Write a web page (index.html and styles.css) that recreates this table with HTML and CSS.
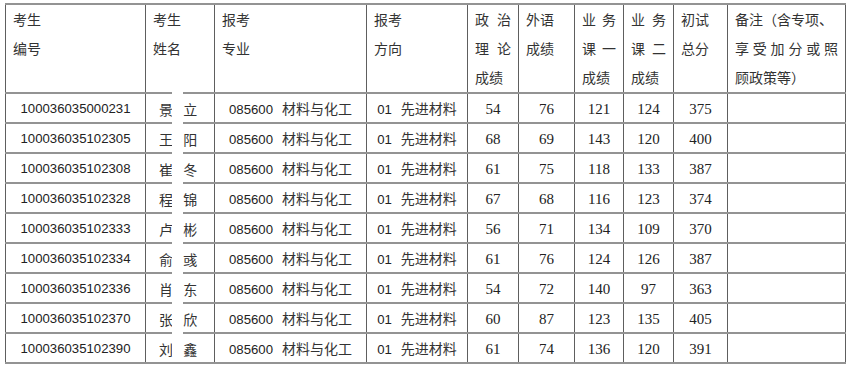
FILE: index.html
```html
<!DOCTYPE html>
<html lang="zh-CN">
<head>
    <meta charset="UTF-8">
    <title>复试名单</title>
    <link rel="stylesheet" href="styles.css">
</head>
<body>
    <div class="sheet">
        <table class="list">
            <colgroup>
                <col style="width:140px"><col style="width:69px"><col style="width:152px"><col style="width:101px">
                <col style="width:51px"><col style="width:56px"><col style="width:49px"><col style="width:50px">
                <col style="width:54px"><col style="width:118px">
            </colgroup>
            <thead>
                <tr>
                    <th><div>考生</div><div>编号</div></th>
                    <th><div>考生</div><div>姓名</div></th>
                    <th><div>报考</div><div>专业</div></th>
                    <th><div>报考</div><div>方向</div></th>
                    <th><div class="spread">政治</div><div class="spread">理论</div><div>成绩</div></th>
                    <th><div>外语</div><div>成绩</div></th>
                    <th><div class="spread">业务</div><div class="spread">课一</div><div>成绩</div></th>
                    <th><div class="spread">业务</div><div class="spread">课二</div><div>成绩</div></th>
                    <th><div>初试</div><div>总分</div></th>
                    <th><div>备注（含专项、</div><div class="spread">享受加分或照</div><div>顾政策等）</div></th>
                </tr>
            </thead>
            <tbody>
                <tr><td class="id">100036035000231</td><td class="name">景 立</td><td><span class="code">085600</span>材料与化工</td><td><span class="code">01</span>先进材料</td><td class="score">54</td><td class="score">76</td><td class="score">121</td><td class="score">124</td><td class="score">375</td><td></td></tr>
                <tr><td class="id">100036035102305</td><td class="name">王 阳</td><td><span class="code">085600</span>材料与化工</td><td><span class="code">01</span>先进材料</td><td class="score">68</td><td class="score">69</td><td class="score">143</td><td class="score">120</td><td class="score">400</td><td></td></tr>
                <tr><td class="id">100036035102308</td><td class="name">崔 冬</td><td><span class="code">085600</span>材料与化工</td><td><span class="code">01</span>先进材料</td><td class="score">61</td><td class="score">75</td><td class="score">118</td><td class="score">133</td><td class="score">387</td><td></td></tr>
                <tr><td class="id">100036035102328</td><td class="name">程 锦</td><td><span class="code">085600</span>材料与化工</td><td><span class="code">01</span>先进材料</td><td class="score">67</td><td class="score">68</td><td class="score">116</td><td class="score">123</td><td class="score">374</td><td></td></tr>
                <tr><td class="id">100036035102333</td><td class="name">卢 彬</td><td><span class="code">085600</span>材料与化工</td><td><span class="code">01</span>先进材料</td><td class="score">56</td><td class="score">71</td><td class="score">134</td><td class="score">109</td><td class="score">370</td><td></td></tr>
                <tr><td class="id">100036035102334</td><td class="name">俞 彧</td><td><span class="code">085600</span>材料与化工</td><td><span class="code">01</span>先进材料</td><td class="score">61</td><td class="score">76</td><td class="score">124</td><td class="score">126</td><td class="score">387</td><td></td></tr>
                <tr><td class="id">100036035102336</td><td class="name">肖 东</td><td><span class="code">085600</span>材料与化工</td><td><span class="code">01</span>先进材料</td><td class="score">54</td><td class="score">72</td><td class="score">140</td><td class="score">97</td><td class="score">363</td><td></td></tr>
                <tr><td class="id">100036035102370</td><td class="name">张 欣</td><td><span class="code">085600</span>材料与化工</td><td><span class="code">01</span>先进材料</td><td class="score">60</td><td class="score">87</td><td class="score">123</td><td class="score">135</td><td class="score">405</td><td></td></tr>
                <tr><td class="id">100036035102390</td><td class="name">刘 鑫</td><td><span class="code">085600</span>材料与化工</td><td><span class="code">01</span>先进材料</td><td class="score">61</td><td class="score">74</td><td class="score">136</td><td class="score">120</td><td class="score">391</td><td></td></tr>
            </tbody>
        </table>
        <!-- privacy mask over the name column -->
        <div class="mask"></div>
    </div>
</body>
</html>
```

FILE: styles.css
```css
body {
    margin: 0;
    background: #fff;
    color: #222;
    font-family: "Liberation Sans", "Noto Sans CJK SC", sans-serif;
}

.sheet {
    position: relative;
    padding: 3px 5px;
}

.list {
    width: 840px;
    table-layout: fixed;
    border-collapse: collapse;
}

.list th, .list td {
    border-left: 1px solid #5e5e5e;
    border-right: 1px solid #5e5e5e;
    border-top: 2px solid #939393;
    border-bottom: 2px solid #939393;
}

.list th {
    height: 81px;
    padding: 0 7px;
    vertical-align: top;
    text-align: left;
    font-weight: normal;
    font-family: "Noto Sans CJK SC", sans-serif;
    font-size: 14px;
    line-height: 29px;
    color: #333;
}

.spread {
    text-align: justify;
    text-align-last: justify;
}

.list td {
    height: 26px;
    padding: 2px 0 0;
    text-align: center;
    font-family: "Noto Sans CJK SC", sans-serif;
    font-size: 14px;
    line-height: 20px;
    color: #333;
}

.list td.id, .code {
    font-family: "Liberation Sans", sans-serif;
    font-size: 13.2px;
    color: #222;
}

.code {
    margin-right: 9px;
}

.list td.name {
    text-align: left;
    padding-left: 13px;
    word-spacing: 7px;
}

.list td.score {
    font-family: "Liberation Serif", serif;
    font-size: 15px;
    color: #222;
}

.mask {
    position: absolute;
    left: 172px;
    top: 92px;
    width: 11px;
    height: 264px;
    background: #fff;
}
```
